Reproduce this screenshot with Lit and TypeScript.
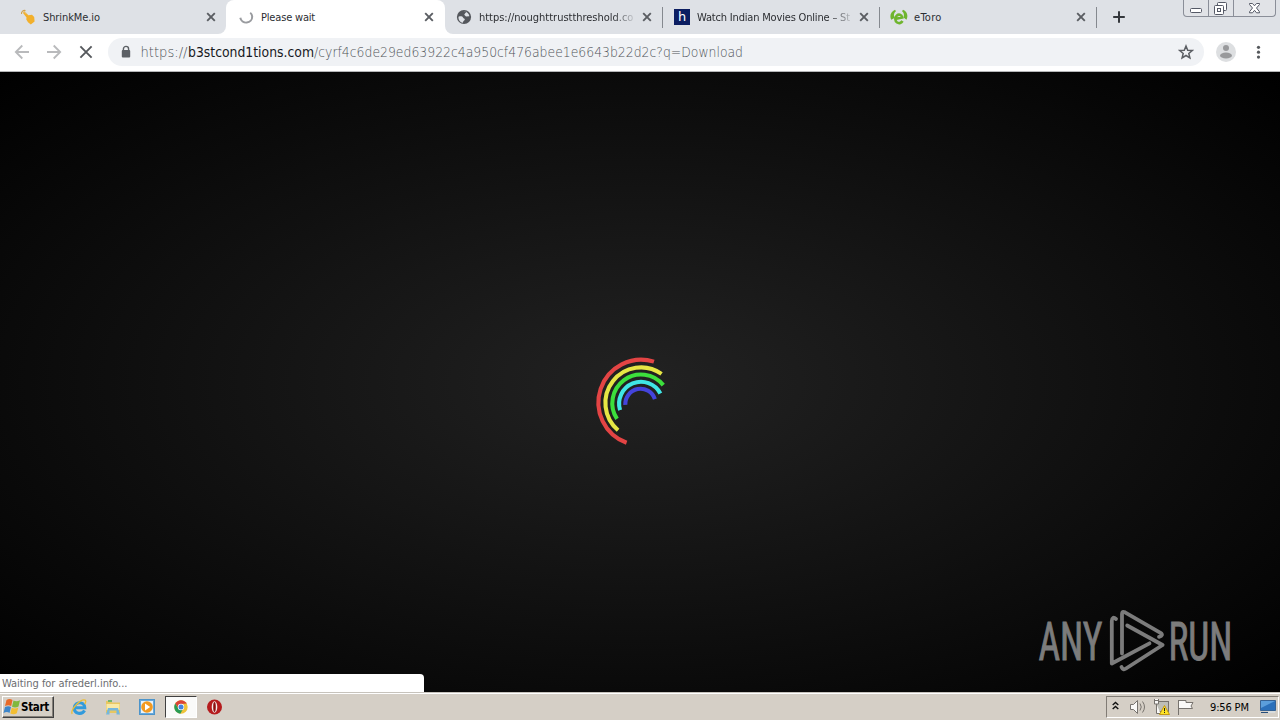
import { LitElement, html, svg, css } from "lit";
import { customElement } from "lit/decorators.js";

const closeIcon = html`<svg class="close" width="10" height="10" viewBox="0 0 10 10"><path d="M1.2 1.2 8.8 8.8M8.8 1.2 1.2 8.8" stroke="#5a5d62" stroke-width="1.9"/></svg>`;

const pointer = html`<svg width="16" height="16" viewBox="0 0 16 16"><path d="M1.5 5A3.2 3.2 0 0 1 5.500 1.500" fill="none" stroke="#cfa04c" stroke-width="1.1"/><path d="M2.6 3.6 4.600 2 8.3 6.3 12 5.7 14.2 8 14.6 12.5 10.8 15.6 8 13.2 6.300 10.5 6.500 8.500z" fill="#f2b02c"/><path d="M3.5 3.5 4.800 2.700 6.500 5" fill="none" stroke="#e5c991"/></svg>`;
const spinner = html`<svg width="16" height="16" viewBox="0 0 16 16"><path d="M2.300 8.700A6 6 0 0 0 14.2 7.500Q14 5 12.2 3.700" fill="none" stroke="#999b9f" stroke-width="2"/></svg>`;
const globe = html`<svg width="16" height="16" viewBox="0 0 16 16"><circle cx="8" cy="8" r="7.1" fill="#54575c"/><path d="M2.5 7.7C4.2 7.2 6.2 7 7 8.4 7.2 9.5 8.8 9 8.8 10.5 8.6 12 7 11.5 7 13.8 4 13.4 2.3 10.8 2.5 7.7zM7.2 2.5 10.5 2.8 9 4.5 8.2 5.8 10 7.6 13.3 7.3C13.2 4.8 11 2.5 7.2 2.5z" fill="#dee1e6"/></svg>`;
const toro = html`<svg width="18" height="16" viewBox="0 0 18 16"><path d="M5 .8C1 2.500-.8 6.500 1.200 10.800L4.5 9C3.500 6.500 3.800 3.500 6 2.2zM13 .8C17 2.500 18.500 6.500 16.500 10.800L13.500 8.500C14.300 6 14 3.500 12 2.2z" fill="#6fb52e"/><path d="M6 9.800 12.200 8.400C11.5 5.500 8.6 5 6.900 6.500 4.7 8.300 4.900 12 7.1 13.500 9.200 14.800 11.5 13.800 12.500 12" fill="none" stroke="#6fb52e" stroke-width="2.6"/></svg>`;

interface Tab { title: string; icon: unknown; cls: string; }
const tabs: Tab[] = [
  { title: "ShrinkMe.io", icon: pointer, cls: "first t1" },
  { title: "Please wait", icon: spinner, cls: "active t2" },
  { title: "https://noughttrustthreshold.co", icon: globe, cls: "sep fade t3" },
  { title: "Watch Indian Movies Online – St", icon: html`<span class="hicon">h</span>`, cls: "sep fade t4" },
  { title: "eToro", icon: toro, cls: "sep t5" },
];

const rings = [
  { c: "#e34444", x: 641.2, y: 402.5, r: 42.8, from: [12.8, -41], to: [-14.5, 40] },
  { c: "#e6e644", x: 641, y: 403, r: 35.6, from: [21.2, -30], to: [-22.7, 27] },
  { c: "#3cdf3c", x: 641, y: 403.2, r: 28.7, from: [23, -18.7], to: [-24.3, 16] },
  { c: "#40e6e6", x: 641, y: 403.7, r: 21.9, from: [20, -10.5], to: [-21.3, 6.5] },
  { c: "#4444dc", x: 640.5, y: 404, r: 15.2, from: [14.6, -5], to: [-15.2, 0.8] },
];

function ring({ c, x, y, r, from, to }: (typeof rings)[number]) {
  const point = ([dx, dy]: number[]) => {
    const k = r / Math.hypot(dx, dy);
    return `${x - 590 + dx * k} ${y - 350 + dy * k}`;
  };
  const large = from[0] * to[1] - from[1] * to[0] > 0 ? 1 : 0;
  return svg`<path d="M${point(from)}A${r} ${r} 0 ${large} 0 ${point(to)}" fill="none" stroke=${c} stroke-width="4.1"/>`;
}

@customElement("app-root")
export class AppRoot extends LitElement {
  static styles = css`
    :host { display: flex; flex-direction: column; width: 1280px; height: 720px; overflow: hidden; font: 11px "DejaVu Sans Condensed", "DejaVu Sans", sans-serif; font-stretch: condensed; color: #2c2e32; }
    * { box-sizing: border-box; }
    svg { display: block; flex: none; }
    .strip { display: flex; height: 34px; flex: none; background: #dee1e6; }
    .tab { display: flex; align-items: center; width: 217px; height: 34px; padding: 0 10px 0 11px; flex: none; }
    .first { width: 226px; padding-left: 20px; border-radius: 0 0 8px 0; background: #dee1e6; }
    .active { width: 219px; padding-left: 12px; padding-right: 11px; background: #fff; border-radius: 8px 8px 0 0; }
    .corner { background: #fff; flex: none; }
    .sep { border-right: 1px solid #8d9198; border-image: linear-gradient(transparent 8px, #85898f 8px, #85898f 27px, transparent 27px) 1; }
    .t3 { width: 218px; border-bottom-left-radius: 8px; background: #dee1e6; }
    .ico { display: flex; width: 16px; margin-right: 7px; flex: none; }
    .t5 .ico { margin-left: -1px; margin-right: 8px; }
    .title { flex: 1; overflow: hidden; white-space: nowrap; line-height: 16px; padding-top: 1px; }
    .fade .title { flex: none; width: 156px; margin-right: auto; mask-image: linear-gradient(90deg, #000 134px, transparent 158px); }
    .t1 .title { letter-spacing: -0.1px; }
    .t2 .title { letter-spacing: -0.18px; }
    .t3 .title { letter-spacing: -0.02px; }
    .t4 .title { letter-spacing: -0.18px; }
    .t5 .title { letter-spacing: 0.3px; }
    .hicon { width: 16px; height: 16px; background: #0c1e62; color: #fff; font: 13px/16px "DejaVu Sans", sans-serif; text-align: center; }
    .new { margin: 11px 0 0 16px; }
    .controls { display: flex; margin-left: 58px; width: 93px; height: 17px; border: 1px solid #8a8e98; border-top: 0; border-radius: 0 0 4px 4px; background: #e1e3e7; overflow: hidden; }
    .toolbar { display: flex; align-items: center; height: 38px; flex: none; background: #fff; border-bottom: 1px solid #b5b6b8; padding: 0 13px 1px 14px; }
    .nav { margin-right: 16px; }
    .omnibox { display: flex; align-items: center; width: 1096px; height: 28px; margin-left: -2px; padding: 0 10px 0 12px; border-radius: 14px; background: #f0f2f5; flex: none; }
    .url { display: flex; flex: 1; margin-left: 9px; }
    .url svg { overflow: visible; }
    .avatar { margin-left: 12px; }
    .dots { margin-left: 20px; }
    .page { position: relative; display: flex; align-items: flex-end; height: 620px; flex: none; background: radial-gradient(ellipse farthest-corner at center, #222 0%, #000 100%); }
    .loader { position: absolute; left: 590px; top: 278px; }
    .mark { position: absolute; left: 1030px; top: 522px; }
    .status { width: 424px; height: 18px; padding-left: 2px; line-height: 19px; background: #fff; border-top-right-radius: 4px; color: #6c6d70; letter-spacing: -0.04px; }
    .taskbar { display: flex; align-items: center; height: 28px; flex: none; background: #d5cfc6; border-top: 1px solid #c7c3bc; box-shadow: inset 0 1px #fff; padding: 1px 1px 0 2px; }
    .start { display: flex; align-items: center; width: 52px; height: 22px; border: 1px solid; border-color: #fff #404040 #404040 #fff; box-shadow: inset -1px -1px #858079; font: bold 11.5px/18px "DejaVu Sans Condensed", sans-serif; font-stretch: condensed; color: #000; letter-spacing: -0.3px; }
    .quick { display: flex; align-items: center; margin-left: 17px; }
    .quick > svg { margin-right: 18px; }
    .current { display: flex; align-items: center; justify-content: center; width: 32px; height: 22px; margin: 0 10px 0 -8px; border: 1px solid; border-color: #404040 #fff #fff #404040; background: #fafaf9; }
    .tray { display: flex; align-items: center; width: 173px; height: 22px; margin-left: auto; border: 1px solid; border-color: #817c75 #fff #fff #817c75; padding-left: 5px; color: #000; }
    .tray .icons { margin-left: 1px; }
    .clock { width: 43px; margin: 0 7px 0 15px; white-space: nowrap; letter-spacing: -0.15px; }
  `;

  render() {
    return html`
      <div class="strip">
        ${tabs.map((t) => {
          const tab = html`<div class="tab ${t.cls}"><span class="ico">${t.icon}</span><span class="title">${t.title}</span>${closeIcon}</div>`;
          return t.cls.includes("t1") || t.cls.includes("t3") ? html`<div class="corner">${tab}</div>` : tab;
        })}
        <svg class="new" width="12" height="12" viewBox="0 0 12 12"><path d="M6 .2v11.6M.2 6h11.6" stroke="#34373c" stroke-width="2"/></svg>
        <div class="controls">
          <svg width="92" height="16" viewBox="0 0 92 16"><path d="M24.5 0v16M49.5 0v16" stroke="#8a8e98"/><g fill="#fff" stroke="#555966"><rect x="6.5" y="8.5" width="11" height="4" rx="1"/><rect x="33.5" y="2.5" width="9" height="8" rx="1"/><rect x="30.5" y="5.5" width="9" height="9" rx="1"/><rect x="33.5" y="8.5" width="3" height="3"/><path d="M65.5 3.5h3l2 2.3 2-2.3h3v1l-3 3.5 3 3.8v1h-3l-2-2.5-2 2.5h-3v-1l3-3.8-3-3.5z"/></g></svg>
        </div>
      </div>
      <div class="toolbar">
        <svg class="nav" width="16" height="16" viewBox="0 0 16 16"><path d="M15 8H2M8.3 1.5 1.8 8l6.5 6.5" fill="none" stroke="#b9babc" stroke-width="1.8"/></svg>
        <svg class="nav" width="16" height="16" viewBox="0 0 16 16"><path d="M1 8h13M7.7 1.5 14.2 8l-6.5 6.5" fill="none" stroke="#b9babc" stroke-width="1.8"/></svg>
        <svg class="nav" width="16" height="16" viewBox="0 0 16 16"><path d="m2.4 2.4 11.2 11.2M13.6 2.4 2.4 13.6" stroke="#55585c" stroke-width="1.9"/></svg>
        <div class="omnibox">
          <svg width="12" height="14" viewBox="0 0 12 14"><path d="M3.4 6V4a2.6 2.6 0 0 1 5.2 0v2" fill="none" stroke="#5c6065" stroke-width="1.4"/><rect x="1.8" y="5" width="8.4" height="7.5" rx="1" fill="#5c6065"/></svg>
          <div class="url">
            <svg width="900" height="24" viewBox="0 -2 900 24" font-family="DejaVu Sans" font-size="13.6">
              <text x="-.5" y="14.5" textLength="47" lengthAdjust="spacingAndGlyphs" font-weight="200" fill="#4f5358">https://</text>
              <text x="47" y="14.5" textLength="126" lengthAdjust="spacingAndGlyphs" fill="#17191d">b3stcond1tions.com</text>
              <text x="173" y="14.5" textLength="429" lengthAdjust="spacingAndGlyphs" font-weight="200" fill="#4f5358">/cyrf4c6de29ed63922c4a950cf476abee1e6643b22d2c?q=Download</text>
            </svg>
          </div>
          <svg width="16" height="16" viewBox="0 0 16 16"><path d="m8 2 1.7 4.2 4.6.3-3.5 3 1.1 4.4L8 11.5l-3.9 2.4 1.1-4.4-3.5-3 4.6-.3z" fill="none" stroke="#5b5e63" stroke-width="1.5"/></svg>
        </div>
        <svg class="avatar" width="20" height="20" viewBox="0 0 20 20"><circle cx="10" cy="10" r="10" fill="#dddfe1"/><circle cx="10" cy="6" r="3" fill="#98999b"/><ellipse cx="10" cy="13.5" rx="6" ry="3" fill="#98999b"/></svg>
        <svg class="dots" width="5" height="16" viewBox="0 0 5 16"><g fill="#55585c"><circle cx="2.5" cy="3.3" r="1.6"/><circle cx="2.5" cy="8.2" r="1.6"/><circle cx="2.5" cy="13.1" r="1.6"/></g></svg>
      </div>
      <div class="page">
        <svg class="loader" width="100" height="100" viewBox="0 0 100 100">${rings.map(ring)}</svg>
        <svg class="mark" width="230" height="95" viewBox="1030 594 230 95">
          <g fill="#7c7c7c" stroke="#7c7c7c" stroke-width=".9" font-family="Roboto" font-size="53"><text x="1038.5" y="659.5" textLength="64" lengthAdjust="spacingAndGlyphs">ANY</text><text x="1168.5" y="659.5" textLength="64" lengthAdjust="spacingAndGlyphs">RUN</text></g>
          <g fill="none" stroke="#7c7c7c" stroke-width="3.8" stroke-linecap="round" stroke-linejoin="round"><path d="M1116 619C1113.5 616.8 1112 617.5 1111.800 621V663.500L1149.500 643.300"/><path d="M1122 653.500V614Q1122 610.8 1125 612.3L1160.500 632.8Q1164 635.500 1159 636.8"/><path d="M1127.200 625.500 1162.600 645 1126 668.500Q1123 670.5 1121.500 667"/></g>
        </svg>
        <div class="status">Waiting for afrederl.info...</div>
      </div>
      <div class="taskbar">
        <div class="start">
          <svg width="18" height="18" viewBox="0 0 17 18"><path d="M3 2Q6 0 9 2L7.7 8Q5 6.3 1.500 8z" fill="#e86a28"/><path d="M10 2.5q3 1.5 6.500-.2L15 8.500q-3 1.8-6.500.3z" fill="#80b83d"/><path d="M1.500 9Q5 7.5 7.5 9L6 15Q3.5 13.200 0 15z" fill="#3e86ca"/><path d="M8.3 9.8q3 1.5 6.500-.2L13.300 15.3q-3 1.7-6.500.2z" fill="#f3be32"/></svg>
          <span>Start</span>
        </div>
        <div class="quick">
          <svg width="16" height="16" viewBox="0 0 16 16"><path d="M3.2 8.7h10.6C13.5 2 4 2 3.3 8.7 3 15.200 11 16 13.6 11.5" fill="none" stroke="#329bdc" stroke-width="3"/><path d="M1.2 14.8C-1 11 10-1 14.3 1.2q1.2 1-.6 4" fill="none" stroke="#ebbd35" stroke-width="1.3"/></svg>
          <svg width="16" height="16" viewBox="0 0 16 16"><path d="M1 2h5l1 1.5h8V14H1z" fill="#e8c761"/><path d="M3 1h4v2H3z" fill="#71b56c"/><path d="M1.5 5h13v6h-13z" fill="#f8e9a6"/><path d="M3 9h10l2 6.500h-3.500V11.500h-7v4H1z" fill="#75b7dc"/></svg>
          <svg width="16" height="16" viewBox="0 0 16 16"><rect x=".5" y=".5" width="15" height="15" fill="#68a9dc" stroke="#4c94ca"/><rect x="2" y="2" width="12" height="12" fill="#e8f3fb"/><circle cx="8" cy="8" r="5.800" fill="#f39a20"/><path d="m6 4.5 5.2 3.5L6 11.5z" fill="#fff"/></svg>
          <div class="current"><svg width="14" height="14" viewBox="0 0 14 14"><circle cx="7" cy="7" r="6.7" fill="#efc33a"/><path d="M1.2 3.6A6.7 6.7 0 0 1 12.8 3.6L7 4 5 9z" fill="#db4437"/><path d="M1.2 3.6A6.7 6.7 0 0 0 6.3 13.7L9.3 8.5 4 8z" fill="#299b55"/><circle cx="7" cy="7" r="3.2" fill="#fff"/><circle cx="7" cy="7" r="2.5" fill="#4383e0"/></svg></div>
          <svg width="16" height="16" viewBox="0 0 16 16"><circle cx="7.500" cy="8" r="7.5" fill="#b51b1d"/><ellipse cx="7.500" cy="8" rx="2.8" ry="5.8" fill="#f5eeee"/><ellipse cx="7.500" cy="8" rx="1.3" ry="5" fill="#8e1010"/></svg>
        </div>
        <div class="tray">
          <svg width="7" height="12" viewBox="0 0 7 12"><path d="m.7 4 2.8-2.5L6.3 4M.7 8l2.8-2.5L6.3 8" fill="none" stroke="#111" stroke-width="1.4"/></svg>
          <svg class="icons" width="75" height="18" viewBox="1119 698 75 18"><g fill="#faf9f7" stroke="#77736e"><path d="M1129.5 704.5h3l4-4v13l-4-4h-3z"/><path d="M1139 703.5q2.5 3.5 0 7M1141.5 701.5q4 5.5 0 11" fill="none"/><rect x="1155.500" y="701.5" width="12" height="10" fill="#bebeb7"/><path d="M1153.500 699v5h4v-5M1153.500 700.500h4M1155.500 704v9.500h4"/></g><path d="m1163.500 705.500 5 9h-10z" fill="#ffe526" stroke="#c49914"/><path d="M1163.500 708v3.200M1163.500 712v1" stroke="#222"/><g fill="#faf9f7" stroke="#77736e"><path d="M1177.500 700v15M1177.500 700.500h7.500v2h7l-2 3.500 1.500 2.500h-6.500h-7.500z"/></g></svg>
          <span class="clock">9:56 PM</span>
          <svg width="16" height="14" viewBox="0 0 16 14"><path d="M.5.5h15v10H.5z" fill="#2b70ba" stroke="#376293"/><path d="M1 1h14L1 8z" fill="#5b9edb"/><path d="M1 12.500h7" stroke="#264d79"/><path d="M8 12h7" stroke="#dce8f1"/></svg>
        </div>
      </div>`;
  }
}
